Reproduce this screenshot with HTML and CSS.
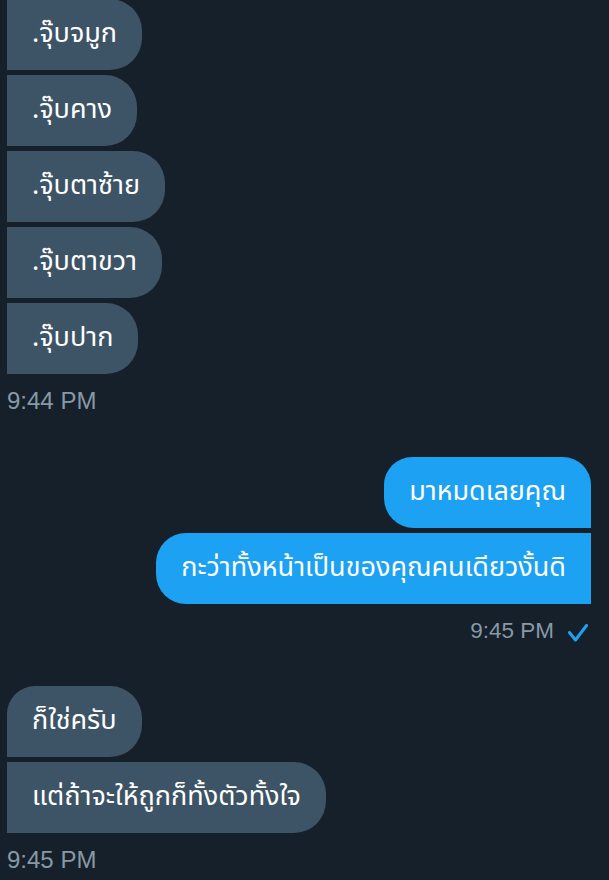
FILE: index.html
```html
<!DOCTYPE html>
<html lang="th">
<head>
<meta charset="utf-8">
<title>DM</title>
<link rel="stylesheet" href="styles.css">
</head>
<body>
<main class="thread">
  <section class="group received first-clip">
    <div class="bubble">.จุ๊บจมูก</div>
    <div class="bubble">.จุ๊บคาง</div>
    <div class="bubble">.จุ๊บตาซ้าย</div>
    <div class="bubble">.จุ๊บตาขวา</div>
    <div class="bubble">.จุ๊บปาก</div>
    <div class="meta">9:44 PM</div>
  </section>

  <section class="group sent">
    <div class="bubble top">มาหมดเลยคุณ</div>
    <div class="bubble">กะว่าทั้งหน้าเป็นของคุณคนเดียวงั้นดิ</div>
    <div class="meta">9:45 PM
      <svg class="check" width="20" height="18" viewBox="0 0 20 18" aria-hidden="true">
        <path d="M1.5 8.5 L7.5 16 L18.5 1.5" fill="none" stroke="#1da1f2" stroke-width="3" stroke-linecap="round" stroke-linejoin="round"/>
      </svg>
    </div>
  </section>

  <section class="group received">
    <div class="bubble top">ก็ใช่ครับ</div>
    <div class="bubble">แต่ถ้าจะให้ถูกก็ทั้งตัวทั้งใจ</div>
    <div class="meta">9:45 PM</div>
  </section>
</main>
</body>
</html>
```

FILE: styles.css
```css
html, body {
  margin: 0;
  padding: 0;
  background: #15202b;
}

body {
  width: 609px;
  height: 880px;
  overflow: hidden;
  font-family: "Liberation Sans", "Noto Sans Thai", "Noto Sans", sans-serif;
}

.thread {
  display: flex;
  flex-direction: column;
  padding: 0 18px 0 7px;
}

.group {
  display: flex;
  flex-direction: column;
  gap: 5px;
}

.group.first-clip {
  margin-top: -1px;
}

.group.sent {
  align-items: flex-end;
  margin-top: 42px;
}

.group.received {
  align-items: flex-start;
}

.group.sent + .group.received {
  margin-top: 41px;
}

.bubble {
  box-sizing: border-box;
  height: 71px;
  display: flex;
  align-items: center;
  padding: 0 25px 2px 25px;
  font-family: "Noto Sans Thai", "Noto Sans", sans-serif;
  font-size: 27px;
  color: #ffffff;
  white-space: nowrap;
}

.received .bubble {
  background: #3d5466;
  border-radius: 0 32px 32px 0;
}

.received .bubble.top {
  border-radius: 28px 32px 32px 0;
}

.sent .bubble {
  background: #1da1f2;
  border-radius: 30px 0 0 30px;
}

.sent .bubble.top {
  border-radius: 28px 28px 0 30px;
}

.meta {
  display: flex;
  align-items: center;
  gap: 14px;
  margin-top: 8px;
  font-family: "Liberation Sans", sans-serif;
  font-size: 24px;
  line-height: 28px;
  color: #8899a6;
}

.sent .meta {
  margin-top: 8px;
  margin-right: 3px;
  font-size: 22.5px;
}

.check {
  display: block;
  margin-top: 3px;
}
```
